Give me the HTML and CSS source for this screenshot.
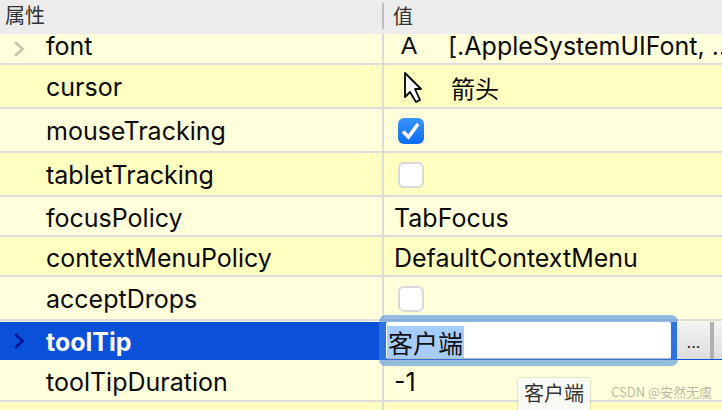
FILE: index.html
```html
<!DOCTYPE html>
<html lang="zh">
<head>
    <meta charset="UTF-8">
    <title>属性</title>
    <link rel="stylesheet" href="styles.css">
</head>
<body>
    <div class="editor-panel">
        <div class="header">
            <div class="name-head">属性</div>
            <div class="value-head">值</div>
        </div>

        <div class="row light h-font">
            <div class="name">
                <svg class="chevron" viewBox="0 0 12 18"><path d="M2 2 L9.5 9 L2 16" fill="none" stroke="#c6c6ac" stroke-width="2.8"/></svg>
                font
            </div>
            <div class="value">
                <span class="font-icon">A</span>
                <span class="font-text">[.AppleSystemUIFont, ..</span>
            </div>
        </div>
        <div class="row dark h-tall">
            <div class="name">cursor</div>
            <div class="value">
                <svg class="cursor-icon" viewBox="0 0 18 31">
                    <path d="M1 1 V25 L6 20 L12 30 L16 28 L11 17 H17 Z" fill="#fff" stroke="#000" stroke-width="1.8" stroke-linejoin="round"/>
                </svg>
                <span class="cursor-text">箭头</span>
            </div>
        </div>
        <div class="row light h-tall">
            <div class="name">mouseTracking</div>
            <div class="value">
                <span class="check checked">
                    <svg viewBox="0 0 26 26"><path d="M5 13.5 L10.5 19 L20 6" fill="none" stroke="#fff" stroke-width="3.6"/></svg>
                </span>
            </div>
        </div>
        <div class="row dark h-tall">
            <div class="name">tabletTracking</div>
            <div class="value"><span class="check"></span></div>
        </div>
        <div class="row light h-mid">
            <div class="name">focusPolicy</div>
            <div class="value">TabFocus</div>
        </div>
        <div class="row dark h-mid">
            <div class="name">contextMenuPolicy</div>
            <div class="value">DefaultContextMenu</div>
        </div>
        <div class="row light h-tall">
            <div class="name">acceptDrops</div>
            <div class="value"><span class="check"></span></div>
        </div>
        <div class="row selected">
            <div class="name">
                <svg class="chevron" viewBox="0 0 12 18"><path d="M2 2 L9.5 9 L2 16" fill="none" stroke="#0a189c" stroke-width="2.8"/></svg>
                toolTip
            </div>
            <div class="value editor">
                <div class="text-box"><span class="selection">客户端</span></div>
                <div class="more-btn">...</div>
                <div class="more-btn"></div>
            </div>
        </div>
        <div class="row light h-last">
            <div class="name">toolTipDuration</div>
            <div class="value">-1</div>
        </div>
        <div class="row dark h-rest">
            <div class="name"></div>
            <div class="value"></div>
        </div>
    </div>

    <div class="tooltip">客户端</div>
    <div class="watermark">CSDN @安然无虞</div>
</body>
</html>
```

FILE: styles.css
```css
body {
    margin: 0;
    width: 722px;
    height: 410px;
    overflow: hidden;
    position: relative;
    font-family: 'Inter', 'Noto Sans CJK SC', sans-serif;
    font-size: 25px;
    color: #0a0a0a;
    background-color: #ffffdc;
}
.header {
    display: flex;
    height: 34px;
    background-color: #ececec;
    color: #333;
    font-size: 20px;
    font-family: 'Noto Sans CJK SC', sans-serif;
}
.name-head {
    width: 382px;
    box-sizing: border-box;
    padding-left: 5px;
    line-height: 30px;
}
.value-head {
    flex: 1;
    margin-top: 3px;
    height: 26px;
    padding-left: 9px;
    line-height: 26px;
    border-left: 2px solid #bdbdbd;
}
.row {
    display: flex;
    box-sizing: border-box;
    border-bottom: 2px solid #dcdcdc;
}
.light {
    background-color: #ffffdc;
}
.dark {
    background-color: #ffffbf;
}
.h-font {
    height: 31px;
    line-height: 24px;
}
.h-font .name,
.h-font .value {
    padding-bottom: 5px;
}
.h-tall {
    height: 44px;
}
.h-tall .name,
.h-tall .value {
    padding-top: 2px;
}
.h-mid {
    height: 40px;
}
.h-mid .name,
.h-mid .value {
    padding-top: 3px;
}
.h-last {
    height: 40px;
}
.h-last .name,
.h-last .value {
    padding-top: 1px;
}
.h-rest {
    height: 20px;
    border-bottom: none;
}
.name {
    width: 382px;
    box-sizing: border-box;
    padding-left: 46px;
    position: relative;
    display: flex;
    align-items: center;
}
.value {
    flex: 1;
    min-width: 0;
    box-sizing: border-box;
    padding-left: 10px;
    border-left: 2px solid #dcdcdc;
    display: flex;
    align-items: center;
    white-space: nowrap;
    overflow: hidden;
}
.chevron {
    position: absolute;
    left: 13px;
    top: 50%;
    margin-top: -9px;
    width: 12px;
    height: 18px;
}
.font-icon {
    font-family: 'Liberation Sans', sans-serif;
    font-size: 24px;
    width: 54px;
    padding-left: 7px;
    box-sizing: border-box;
    flex-shrink: 0;
}
.cursor-icon {
    width: 18px;
    height: 31px;
    margin-left: 10px;
    flex-shrink: 0;
}
.cursor-text {
    margin-left: 29px;
    font-family: 'Noto Sans CJK SC', sans-serif;
    font-size: 24px;
}
.check {
    width: 26px;
    height: 26px;
    margin-left: 4px;
    box-sizing: border-box;
    border: 2px solid #d8d8d8;
    border-radius: 6px;
    background-color: #fff;
}
.check.checked {
    border: none;
    background: linear-gradient(#3a95ff, #0a6cf0);
}
.check svg {
    display: block;
    width: 26px;
    height: 26px;
}
.selected {
    height: 40px;
    margin-top: 1px;
    background-color: #0b50d8;
    border-bottom: 2px solid #ffffdc;
    box-shadow: inset 0 -1px 0 #0b50d8;
    color: #fff;
    font-weight: 700;
}
.selected .name {
    padding-top: 2px;
}
.editor {
    position: relative;
    z-index: 1;
    overflow: visible;
    padding: 0 0 0 4px;
    border-left: none;
    align-items: flex-start;
    font-weight: 400;
    color: #111;
    height: 38px;
}
.text-box {
    width: 285px;
    height: 37px;
    box-sizing: border-box;
    flex-shrink: 0;
    background-color: #fff;
    border-bottom: 1px solid #b8b8b8;
    box-shadow: 0 0 0 7px rgba(70, 140, 225, 0.58);
    border-radius: 2px;
    padding: 4px 0 0 1px;
    font-family: 'Noto Sans CJK SC', sans-serif;
    line-height: 32px;
}
.selection {
    display: inline-block;
    padding: 0 1px;
    background-color: #a6cdff;
    height: 32px;
}
.more-btn {
    width: 33px;
    height: 37px;
    flex-shrink: 0;
    margin-left: 6px;
    background: linear-gradient(#f3f3f3, #dedede);
    border-right: 4px solid #b0b0b0;
    color: #222;
    font-size: 16px;
    line-height: 40px;
    text-align: center;
}
.more-btn + .more-btn {
    margin-left: 0;
}
.tooltip {
    position: absolute;
    left: 518px;
    top: 378px;
    width: 72px;
    height: 40px;
    background-color: #fbfbf6;
    box-shadow: 0 0 2px rgba(0, 0, 0, 0.3);
    color: #333;
    font-family: 'Noto Sans CJK SC', sans-serif;
    font-size: 20px;
    line-height: 30px;
    text-align: center;
}
.watermark {
    position: absolute;
    left: 611px;
    top: 382px;
    color: rgba(120, 120, 120, 0.55);
    font-family: 'Noto Sans CJK SC', sans-serif;
    font-size: 13px;
    line-height: 20px;
}
```
